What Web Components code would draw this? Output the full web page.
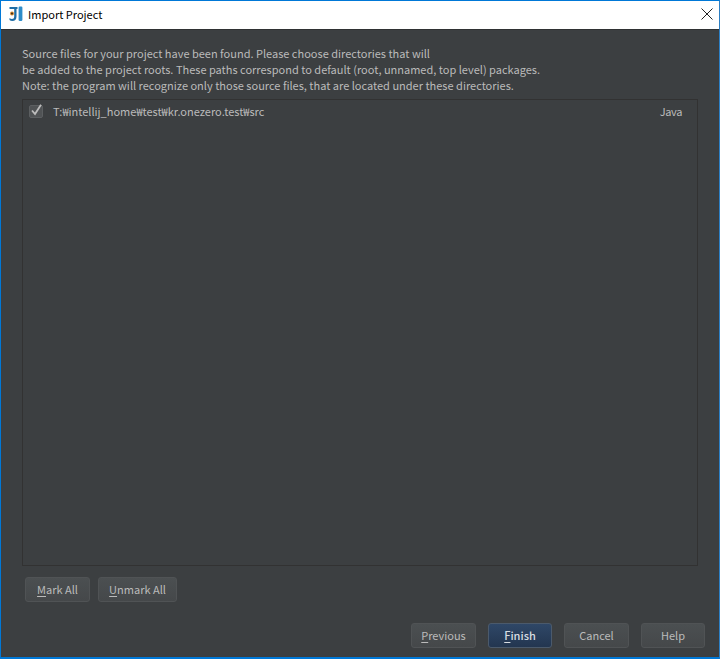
<!DOCTYPE html>
<html>
<head>
<meta charset="utf-8">
<title>Import Project</title>
<style>
  html, body { margin: 0; padding: 0; height: 100%; background: #3c3f41; }
  body { font-family: "Noto Sans CJK KR", "Noto Sans", sans-serif; font-size: 11px; }
</style>
</head>
<body>
<import-dialog heading="Import Project">
  <p-note slot="note">Source files for your project have been found. Please choose directories that will
be added to the project roots. These paths correspond to default (root, unnamed, top level) packages.
Note: the program will recognize only those source files, that are located under these directories.</p-note>
  <root-list slot="list">
    <root-row path="T:₩intellij_home₩test₩kr.onezero.test₩src" kind="Java"></root-row>
  </root-list>
  <ij-button slot="marks" mnemonic="M" rest="ark All" w="65"></ij-button>
  <ij-button slot="marks" mnemonic="U" rest="nmark All" w="79"></ij-button>
  <ij-button slot="actions" mnemonic="P" rest="revious" w="65"></ij-button>
  <ij-button slot="actions" mnemonic="F" rest="inish" w="64" primary></ij-button>
  <ij-button slot="actions" rest="Cancel" w="65"></ij-button>
  <ij-button slot="actions" rest="Help" w="64"></ij-button>
</import-dialog>

<script>
const dialog_template = document.createElement("template");
dialog_template.innerHTML = `
  <style>
    :host {
      display: flex;
      flex-direction: column;
      box-sizing: border-box;
      width: 720px;
      height: 659px;
      border: 1px solid #0078d7;
      border-right-color: #2c7fc4;
      border-bottom-width: 2px;
      background: #3c3f41;
      color: #bbbbbb;
    }
    .titlebar {
      flex: none;
      display: flex;
      align-items: center;
      height: 28px;
      background: #fff;
      color: #000;
      padding: 0 0 2px 8px;
      box-sizing: border-box;
      font-size: 11px;
    }
    .titlebar svg { flex: none; margin-right: 4px; }
    .titlebar .name { flex: 1; }
    .close { flex: none; width: 16px; height: 16px; margin-right: 8px; }
    .sep { flex: none; height: 1px; background: #2f3133; }
    .body {
      flex: 1;
      min-height: 0;
      display: flex;
      flex-direction: column;
      padding: 15px 21px 9px 21px;
    }
    .list { flex: 1; min-height: 0; display: flex; margin-top: 6px; }
    .marks { flex: none; display: flex; gap: 8px; padding: 11px 0 0 3px; }
    .actions { flex: none; display: flex; justify-content: flex-end; gap: 12px; padding: 21px 0 0 0; margin-right: -7px; }
    ::slotted([slot="list"]) { flex: 1; }
  </style>
  <div class="titlebar">
    <svg width="15" height="16" viewBox="0 0 15 16">
      <path d="M0.5 1H8.5V3H7.5V10.5C7.5 13.5 5.8 15 3.4 15C2.2 15 1.2 14.6 0.5 14V12C1.2 12.7 2.2 13 3 13C4.4 13 5.2 12.2 5.2 10.5V3H0.5Z" fill="#1f6ea6"/>
      <circle cx="3" cy="7.5" r="2" fill="#d98a2b"/>
      <circle cx="3" cy="7.5" r="0.9" fill="#222"/>
      <rect x="9.6" y="0.5" width="3.8" height="14.5" rx="1.2" fill="#2d8cc9"/>
    </svg>
    <span class="name"></span>
    <svg class="close" viewBox="0 0 16 16"><path d="M2.5 2.5L13.5 13.5M13.5 2.5L2.5 13.5" stroke="#222" stroke-width="1" fill="none"/></svg>
  </div>
  <div class="sep"></div>
  <div class="body">
    <slot name="note"></slot>
    <div class="list"><slot name="list"></slot></div>
    <div class="marks"><slot name="marks"></slot></div>
    <div class="actions"><slot name="actions"></slot></div>
  </div>
`;

class ImportDialog extends HTMLElement {
  constructor() {
    super();
    const shadow = this.attachShadow({ mode: "open" });
    shadow.append(dialog_template.content.cloneNode(true));
  }

  connectedCallback() {
    this.shadowRoot.querySelector(".name").textContent = this.getAttribute("heading");
  }
}

class PNote extends HTMLElement {
  constructor() {
    super();
    // no whitespace around the slot, pre-line would render it
    this.attachShadow({ mode: "open" }).innerHTML = `<style>:host { display: block; white-space: pre-line; line-height: 16px; color: #bbbbbb; font-size: 11px; }</style><slot></slot>`;
  }
}

class RootList extends HTMLElement {
  constructor() {
    super();
    this.attachShadow({ mode: "open" }).innerHTML = `
      <style>
        :host { display: block; box-sizing: border-box; border: 1px solid #323232; background: #3c3f41; padding: 1px 0; }
      </style>
      <slot></slot>`;
  }
}

class RootRow extends HTMLElement {
  constructor() {
    super();
    this.attachShadow({ mode: "open" }).innerHTML = `
      <style>
        :host { display: flex; align-items: center; height: 20px; padding: 0 15px 0 6px; color: #bbbbbb; font-size: 11px; }
        .check { flex: none; width: 14px; height: 14px; margin-right: 10px; }
        .path { flex: 1; }
        .kind { letter-spacing: -0.4px; }
      </style>
      <svg class="check" viewBox="0 0 14 14">
        <rect x="0.5" y="1.5" width="13" height="12" rx="1.5" fill="#505355" stroke="#5c5f61"/>
        <path d="M3 6.5L6 10L12 0.8" stroke="#bdbdbd" stroke-width="1.8" fill="none"/>
      </svg>
      <span class="path"></span>
      <span class="kind"></span>`;
  }

  connectedCallback() {
    this.shadowRoot.querySelector(".path").textContent = this.getAttribute("path");
    this.shadowRoot.querySelector(".kind").textContent = this.getAttribute("kind");
  }
}

class IjButton extends HTMLElement {
  constructor() {
    super();
    this.attachShadow({ mode: "open" }).innerHTML = `
      <style>
        :host {
          display: flex;
          align-items: center;
          justify-content: center;
          box-sizing: border-box;
          height: 25px;
          padding-bottom: 2px;
          border: 1px solid #505355;
          border-radius: 3px;
          background: linear-gradient(#4b4f51, #45484a);
          color: #bbbbbb;
          font-size: 11px;
        }
        :host([primary]) {
          border-color: #4b5a6c;
          background: linear-gradient(#2f4767, #233650);
          color: #d8dde3;
          font-weight: 500;
        }
        u { text-underline-offset: 2px; }
      </style>
      <span><u></u><span class="rest"></span></span>`;
  }

  connectedCallback() {
    this.style.width = this.getAttribute("w") + "px";
    this.shadowRoot.querySelector("u").textContent = this.getAttribute("mnemonic") || "";
    this.shadowRoot.querySelector(".rest").textContent = this.getAttribute("rest");
  }
}

customElements.define("import-dialog", ImportDialog);
customElements.define("p-note", PNote);
customElements.define("root-list", RootList);
customElements.define("root-row", RootRow);
customElements.define("ij-button", IjButton);
</script>
</body>
</html>
